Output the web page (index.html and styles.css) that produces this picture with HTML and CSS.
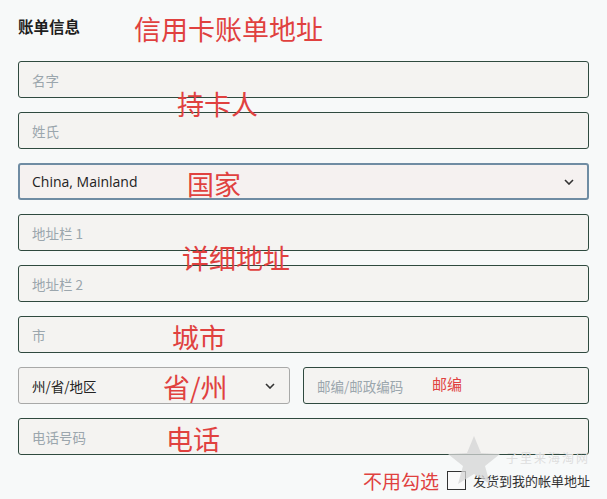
FILE: index.html
```html
<!DOCTYPE html>
<html lang="zh">
<head>
<meta charset="utf-8">
<link rel="stylesheet" href="styles.css">
</head>
<body>
<div class="page">
  <h2 class="title">账单信息</h2>
  <div class="fields">
    <div class="field">名字</div>
    <div class="field">姓氏</div>
    <div class="field select focus"><span class="value">China, Mainland</span><svg class="chev" width="10" height="6" viewBox="0 0 10 6"><path d="M1 1l4 4 4-4" fill="none" stroke="#333" stroke-width="1.6"/></svg></div>
    <div class="field">地址栏 1</div>
    <div class="field">地址栏 2</div>
    <div class="field">市</div>
    <div class="row">
      <div class="field select state"><span class="value">州/省/地区</span><svg class="chev" width="10" height="6" viewBox="0 0 10 6"><path d="M1 1l4 4 4-4" fill="none" stroke="#333" stroke-width="1.6"/></svg></div>
      <div class="field zip">邮编/邮政编码</div>
    </div>
    <div class="field">电话号码</div>
  </div>
  <div class="ship">
    <span class="box"></span>
    <span class="ship-label">发货到我的帐单地址</span>
  </div>

  <span class="note big n1">信用卡账单地址</span>
  <span class="note big n2">持卡人</span>
  <span class="note big n3">国家</span>
  <span class="note big n4">详细地址</span>
  <span class="note big n5">城市</span>
  <span class="note big n6">省/州</span>
  <span class="note big n7">电话</span>
  <span class="note small n8">邮编</span>
  <span class="note mid n9">不用勾选</span>

  <svg class="star" width="56" height="52" viewBox="0 0 56 52"><path d="M28 2l7 17 19 1-15 12 5 18-16-10-16 10 5-18L2 20l19-1z" fill="#d4d4d4" opacity="0.75"/></svg>
  <span class="wm">子里来海淘网</span>
</div>
</body>
</html>
```

FILE: styles.css
```css
html, body {
  margin: 0;
  padding: 0;
  background: #f7f9f9;
}
body {
  font-family: "Noto Sans CJK SC", "Noto Sans", sans-serif;
  color: #222;
}
.page {
  position: relative;
  width: 607px;
  height: 499px;
  overflow: hidden;
  padding: 0 18px;
  box-sizing: border-box;
}
.title {
  margin: 0;
  padding-top: 15px;
  height: 61px;
  box-sizing: border-box;
  font-size: 15.5px;
  line-height: 22px;
  font-weight: 700;
  color: #1e1e1e;
}
.fields {
  display: flex;
  flex-direction: column;
  gap: 14px;
  width: 571px;
}
.field {
  height: 37px;
  box-sizing: border-box;
  border: 1px solid #2f4a3f;
  border-radius: 3px;
  background: #f4f3f1;
  padding: 0 13px;
  display: flex;
  align-items: center;
  font-size: 13.5px;
  color: #9ba6ad;
}
.field.select {
  justify-content: space-between;
  color: #222;
  font-family: "Open Sans", "Noto Sans CJK SC", sans-serif;
  font-size: 14px;
}
.field.focus {
  border: 2px solid #6f8ca3;
  padding: 0 12px;
  background: #f5f1f0;
}
.chev {
  margin-right: 1px;
}
.row {
  display: flex;
  gap: 13px;
}
.state {
  width: 272px;
  border-color: #a8a9a8;
  font-family: "Noto Sans CJK SC", sans-serif !important;
  font-size: 13.5px !important;
}
.zip {
  flex: 1;
}
.ship {
  display: flex;
  justify-content: flex-end;
  align-items: center;
  gap: 7px;
  width: 571px;
  margin-top: 16px;
}
.box {
  width: 19px;
  height: 19px;
  border: 1px solid #333;
  box-sizing: border-box;
  background: #fafafa;
}
.ship-label {
  font-size: 13px;
  color: #333;
  margin-right: -1px;
}
.note {
  position: absolute;
  color: #e0413f;
  line-height: 1;
  white-space: nowrap;
}
.big { font-size: 27px; }
.mid { font-size: 19px; }
.small { font-size: 15px; }
.n1 { left: 134px; top: 15px; }
.n2 { left: 177px; top: 90px; }
.n3 { left: 187px; top: 170px; }
.n4 { left: 182px; top: 244px; }
.n5 { left: 172px; top: 323px; }
.n6 { left: 163px; top: 373px; }
.n7 { left: 166px; top: 425px; }
.n8 { left: 432px; top: 376px; }
.n9 { left: 363px; top: 471px; }
.star {
  position: absolute;
  left: 446px;
  top: 434px;
}
.wm {
  position: absolute;
  left: 506px;
  top: 452px;
  font-family: "Liberation Serif", "Noto Sans CJK SC", serif;
  font-size: 12px;
  line-height: 14px;
  color: #dedede;
  letter-spacing: 2px;
}
```
